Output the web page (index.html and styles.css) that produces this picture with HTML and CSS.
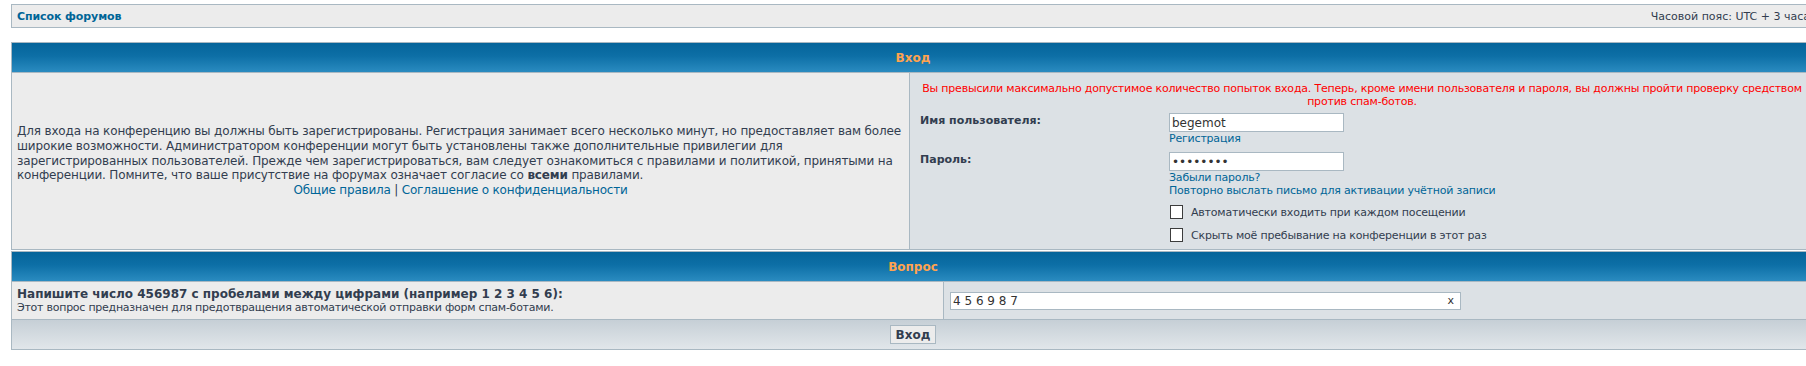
FILE: index.html
```html
<!DOCTYPE html>
<html lang="ru">
<head>
<meta charset="utf-8">
<title>Вход</title>
<link rel="stylesheet" href="styles.css">
</head>
<body>
<div class="page">
  <div class="navbar">
    <a class="crumb" href="#">Список форумов</a>
    <span class="datetime">Часовой пояс: UTC + 3 часа</span>
  </div>

  <div class="tablebg login">
    <div class="th">Вход</div>
    <div class="row1 intro">
      <p class="genmed">Для входа на конференцию вы должны быть зарегистрированы. Регистрация занимает всего несколько минут, но предоставляет вам более широкие возможности. Администратором конференции могут быть установлены также дополнительные привилегии для зарегистрированных пользователей. Прежде чем зарегистрироваться, вам следует ознакомиться с правилами и политикой, принятыми на конференции. Помните, что ваше присутствие на форумах означает согласие со <b>всеми</b> правилами.</p>
      <p class="genmed links"><a href="#">Общие правила</a> | <a href="#">Соглашение о конфиденциальности</a></p>
    </div>
    <div class="row2 fields">
      <p class="error">Вы превысили максимально допустимое количество попыток входа. Теперь, кроме имени пользователя и пароля, вы должны пройти проверку средством против спам-ботов.</p>
      <div class="field-grid">
        <label class="lbl" for="username">Имя пользователя:</label>
        <div class="ctl">
          <input class="post" id="username" type="text" value="begemot">
          <a class="small-link" href="#">Регистрация</a>
        </div>
        <label class="lbl" for="password">Пароль:</label>
        <div class="ctl">
          <input class="post" id="password" type="password" value="12345678">
          <a class="small-link" href="#">Забыли пароль?</a>
          <a class="small-link" href="#">Повторно выслать письмо для активации учётной записи</a>
        </div>
        <div class="lbl"></div>
        <div class="ctl checks">
          <label class="check"><input class="box" type="checkbox"><span>Автоматически входить при каждом посещении</span></label>
          <label class="check"><input class="box" type="checkbox"><span>Скрыть моё пребывание на конференции в этот раз</span></label>
        </div>
      </div>
    </div>
  </div>

  <div class="tablebg question">
    <div class="th">Вопрос</div>
    <div class="row1 q-text">
      <b class="q-title">Напишите число 456987 с пробелами между цифрами (например 1 2 3 4 5 6):</b>
      <span class="gensmall">Этот вопрос предназначен для предотвращения автоматической отправки форм спам-ботами.</span>
    </div>
    <div class="row2 q-answer">
      <div class="answer-wrap">
        <input class="post answer" type="text" value="4 5 6 9 8 7">
        <span class="clear">x</span>
      </div>
    </div>
    <div class="cat">
      <button class="btnmain" type="button">Вход</button>
    </div>
  </div>
</div>
</body>
</html>
```

FILE: styles.css
```css
html, body {
  margin: 0;
  padding: 0;
  background: #ffffff;
  overflow: hidden;
}

body {
  font-family: "DejaVu Sans", Verdana, sans-serif;
  color: #323d4f;
  font-size: 11px;
}

a {
  color: #006597;
  text-decoration: none;
}

.page {
  width: 1804px;
  margin: 4px 0 0 11px;
}

.navbar {
  box-sizing: border-box;
  height: 24px;
  border: 1px solid #a9b8c2;
  background: #ececec;
  display: flex;
  align-items: center;
  justify-content: space-between;
  padding: 0 4px 0 5px;
}

.crumb {
  font-weight: bold;
  font-size: 11px;
  letter-spacing: -0.1px;
}

.datetime {
  font-size: 11px;
  color: #323d4f;
}

.tablebg {
  background: #a9b8c2;
  padding: 1px;
  display: grid;
  gap: 1px;
}

.login {
  margin-top: 14px;
  grid-template-columns: 897px 1fr;
}

.question {
  margin-top: 1px;
  grid-template-columns: 931px 1fr;
}

.th {
  grid-column: 1 / -1;
  height: 29px;
  background: linear-gradient(#05649a, #0d6fa6 45%, #2a8bc0);
  color: #ffa34f;
  font-weight: bold;
  font-size: 12px;
  display: flex;
  align-items: center;
  justify-content: center;
}

.row1 {
  background: #ececec;
}

.row2 {
  background: #dce1e5;
}

.intro {
  display: flex;
  flex-direction: column;
  justify-content: center;
  padding: 0 5px;
  height: 176px;
}

.genmed {
  margin: 0;
  font-size: 12px;
  line-height: 14.8px;
  letter-spacing: -0.15px;
}

.links {
  text-align: center;
  letter-spacing: -0.2px;
}

.fields {
  padding: 9px 6px 0 6px;
}

.error {
  margin: 0;
  color: #ff0000;
  text-align: center;
  font-size: 11px;
  line-height: 13px;
  letter-spacing: -0.2px;
}

.field-grid {
  display: grid;
  grid-template-columns: 249px 1fr;
  margin-top: 5px;
  padding-left: 4px;
  row-gap: 7px;
}

.lbl {
  font-weight: bold;
  font-size: 11px;
  line-height: 13px;
  padding-top: 1px;
  color: #323d4f;
}

.ctl {
  display: flex;
  flex-direction: column;
  align-items: flex-start;
}

.post {
  box-sizing: border-box;
  width: 175px;
  height: 19px;
  border: 1px solid #a9b8c2;
  background: #ffffff;
  font-family: "DejaVu Sans", Verdana, sans-serif;
  font-size: 12px;
  color: #333333;
  padding: 0 2px;
  margin: 0;
  outline: none;
}

.small-link {
  font-size: 11px;
  line-height: 13px;
  letter-spacing: -0.2px;
}

.checks {
  margin-top: 1px;
  gap: 9px;
}

.check {
  display: flex;
  align-items: flex-end;
  font-size: 11px;
  line-height: 13px;
  letter-spacing: -0.2px;
}

.box {
  appearance: none;
  -webkit-appearance: none;
  box-sizing: border-box;
  width: 13px;
  height: 14px;
  margin: 0 8px 0 1px;
  border: 1px solid #3c3c3c;
  background: #ffffff;
}

.q-text {
  display: flex;
  flex-direction: column;
  justify-content: center;
  height: 37px;
  padding: 0 5px;
}

.q-title {
  font-size: 12px;
  line-height: 14px;
}

.gensmall {
  font-size: 11px;
  line-height: 13px;
  letter-spacing: -0.25px;
}

.q-answer {
  display: flex;
  align-items: center;
  padding-left: 6px;
}

.answer-wrap {
  position: relative;
  width: 511px;
}

.answer {
  width: 511px;
  height: 18px;
  font-size: 12px;
}

.clear {
  position: absolute;
  right: 7px;
  top: 2px;
  font-size: 11px;
  line-height: 13px;
  color: #333333;
}

.cat {
  grid-column: 1 / -1;
  height: 29px;
  background: linear-gradient(#c6cfd6, #e1e6ea);
  display: flex;
  align-items: center;
  justify-content: center;
}

.btnmain {
  box-sizing: border-box;
  height: 19px;
  padding: 0 5px;
  font-family: "DejaVu Sans", Verdana, sans-serif;
  font-size: 12px;
  font-weight: bold;
  color: #323d4f;
  background: #ececec;
  border: 1px solid #a9b8c2;
  margin: 0;
}
```
